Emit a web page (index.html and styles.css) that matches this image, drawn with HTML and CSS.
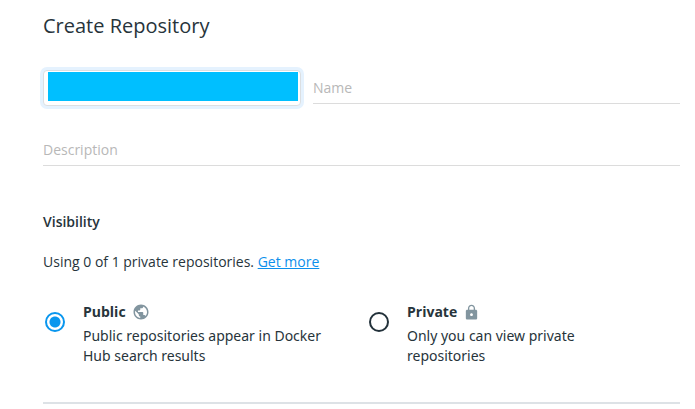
FILE: index.html
```html
<!DOCTYPE html>
<html lang="en">
<head>
<meta charset="utf-8">
<title>Create Repository</title>
<link rel="stylesheet" href="styles.css">
</head>
<body>
<main class="page">
  <h1 class="title">Create Repository</h1>
  <form>
    <div class="name-row">
      <button class="namespace" type="button" aria-label="Namespace"><span class="namespace-value"></span></button>
      <input class="field" type="text" placeholder="Name" aria-label="Name">
    </div>
    <input class="field description" type="text" placeholder="Description" aria-label="Description">
    <h2 class="subtitle">Visibility</h2>
    <p class="usage">Using 0 of 1 private repositories. <a href="#">Get more</a></p>
    <div class="options">
      <label class="option">
        <input class="radio" type="radio" name="visibility" checked>
        <span class="option-text">
          <span class="option-title">Public
            <svg class="icon" viewBox="0 0 24 24" aria-hidden="true"><path d="M12 2C6.48 2 2 6.48 2 12s4.480 10 10 10 10-4.480 10-10S17.520 2 12 2zm-1 17.930c-3.950-.49-7-3.850-7-7.930 0-.62.08-1.210.21-1.790L9 15v1c0 1.100.9 2 2 2v1.930zm6.900-2.540c-.26-.81-1-1.390-1.900-1.390h-1v-3c0-.55-.45-1-1-1H8v-2h2c.55 0 1-.45 1-1V7h2c1.100 0 2-.9 2-2v-.41c2.930 1.190 5 4.060 5 7.410 0 2.080-.8 3.970-2.100 5.390z"/></svg>
          </span>
          <span class="option-detail">Public repositories appear in Docker Hub search results</span>
        </span>
      </label>
      <label class="option">
        <input class="radio" type="radio" name="visibility">
        <span class="option-text">
          <span class="option-title">Private
            <svg class="icon icon-lock" viewBox="0 0 24 24" aria-hidden="true"><path d="M18 8h-1V6c0-2.760-2.240-5-5-5S7 3.240 7 6v2H6c-1.100 0-2 .9-2 2v10c0 1.100.9 2 2 2h12c1.100 0 2-.9 2-2V10c0-1.100-.9-2-2-2zm-6 9c-1.100 0-2-.9-2-2s.9-2 2-2 2 .9 2 2-.9 2-2 2zm3.100-9H8.900V6c0-1.710 1.390-3.100 3.100-3.100s3.100 1.390 3.100 3.100v2z"/></svg>
          </span>
          <span class="option-detail">Only you can view private repositories</span>
        </span>
      </label>
    </div>
    <hr class="divider">
  </form>
</main>
</body>
</html>
```
FILE: styles.css
```css
* { box-sizing: border-box; }
body {
  margin: 0;
  background: #fff;
  color: #27343b;
  font: 14px/20px "Open Sans", "Noto Sans", sans-serif;
}
.page { padding: 12px 15px 0 43px; }
.title {
  margin: 0 0 30px;
  font-size: 20px;
  line-height: 28px;
  font-weight: 400;
}
.name-row {
  display: flex;
  gap: 12px;
  align-items: flex-start;
}
.namespace {
  flex: 0 1 258px;
  height: 36px;
  padding: 1px 2px 4px 4px;
  display: flex;
  border: 1px solid #dcdfe2;
  border-radius: 4px;
  background: #fff;
  box-shadow: 0 0 0 3px #e5f2fe;
}
.namespace-value {
  flex: 1;
  align-self: stretch;
  background: #00bfff;
}
.field {
  flex: 1;
  min-width: 0;
  height: 34px;
  padding: 2px 0 0;
  border: 0;
  border-bottom: 1px solid #dcdcdc;
  border-radius: 0;
  background: none;
  color: inherit;
  font: inherit;
  outline: 0;
}
.field::placeholder { color: #b8b8b8; opacity: 1; }
.description {
  display: block;
  width: 100%;
  margin-top: 26px;
}
.subtitle {
  margin: 46px 0 20px;
  font-size: 14px;
  line-height: 20px;
  font-weight: 600;
}
.usage { margin: 0 0 30px; }
.usage a { color: #0c90ec; }
.options { display: flex; gap: 24px; }
.option {
  flex: 0 1 300px;
  display: flex;
  align-items: flex-start;
  gap: 18px;
}
.radio {
  appearance: none;
  flex: none;
  width: 20px;
  height: 20px;
  margin: 10px 0 0 2px;
  border: 2px solid #22313a;
  border-radius: 50%;
}
.radio:checked {
  border-color: #0996ee;
  background: radial-gradient(circle, #0996ee 5px, transparent 6px);
}
.option-text {
  display: flex;
  flex-direction: column;
  flex: 0 1 250px;
}
.option:last-child .option-text { flex-basis: 200px; }
.option-title {
  display: flex;
  align-items: center;
  gap: 6px;
  height: 24px;
  padding-bottom: 4px;
  font-weight: 700;
}
.option-detail { font-family: "Noto Sans", "Open Sans", sans-serif; }
.icon {
  width: 18px;
  height: 18px;
  fill: #82959f;
}
.icon-lock {
  width: 17px;
  height: 17px;
}
.divider {
  height: 2px;
  margin: 36px 0 0;
  border: 0;
  background: #dde2e6;
}
```
